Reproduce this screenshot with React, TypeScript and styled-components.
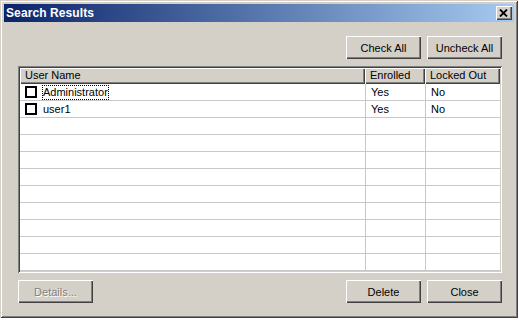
import React from 'react';
import styled, { createGlobalStyle } from 'styled-components';

const GlobalStyle = createGlobalStyle`
  html, body {
    margin: 0;
    padding: 0;
    background: #ffffff;
  }
  body {
    font-family: "Liberation Sans", Arial, sans-serif;
    font-size: 11px;
  }
`;

interface UserRow {
  name: string;
  enrolled: string;
  lockedOut: string;
}

const users: UserRow[] = [
  { name: 'Administrator', enrolled: 'Yes', lockedOut: 'No' },
  { name: 'user1', enrolled: 'Yes', lockedOut: 'No' },
];

const TOTAL_ROWS = 11;

const App: React.FC = () => {
  const rows: (UserRow | null)[] = [];
  for (let i = 0; i < TOTAL_ROWS; i++) rows.push(users[i] || null);

  return (
    <>
      <GlobalStyle />
      <Window>
        <TitleBar>
          <TitleText>Search Results</TitleText>
          <CloseButton aria-label="Close">
            <svg width="9" height="8" viewBox="0 0 9 8">
              <path d="M1 0.5L8 7.5M8 0.5L1 7.5" stroke="#000" strokeWidth="1.8" />
            </svg>
          </CloseButton>
        </TitleBar>

        <Body>
          <ButtonRow $align="flex-end">
            <Button>Check All</Button>
            <Button>Uncheck All</Button>
          </ButtonRow>

          <ListView>
            <HeaderRow>
              <HeaderCell>User Name</HeaderCell>
              <HeaderCell>Enrolled</HeaderCell>
              <HeaderCell>Locked Out</HeaderCell>
            </HeaderRow>
            <Rows>
              {rows.map((row, i) => (
                <Row key={i}>
                  <Cell>
                    {row && (
                      <>
                        <CheckBox />
                        <NameLabel $focused={i === 0}>{row.name}</NameLabel>
                      </>
                    )}
                  </Cell>
                  <Cell>{row?.enrolled}</Cell>
                  <Cell>{row?.lockedOut}</Cell>
                </Row>
              ))}
            </Rows>
          </ListView>

          <ButtonRow $align="space-between">
            <Button disabled>Details...</Button>
            <ButtonGroup>
              <Button>Delete</Button>
              <Button>Close</Button>
            </ButtonGroup>
          </ButtonRow>
        </Body>
      </Window>
    </>
  );
};

export default App;

// Styled Components
const Window = styled.div`
  box-sizing: border-box;
  width: 518px;
  height: 318px;
  padding: 4px;
  background: #d4d0c8;
  display: flex;
  flex-direction: column;
  box-shadow:
    inset 1px 1px 0 #d4d0c8,
    inset -1px -1px 0 #404040,
    inset 2px 2px 0 #ffffff,
    inset -2px -2px 0 #808080;
`;

const TitleBar = styled.div`
  height: 18px;
  display: flex;
  align-items: center;
  justify-content: space-between;
  padding: 0 2px 0 2px;
  background: linear-gradient(to right, #0a246a, #a6caf0);
`;

const TitleText = styled.span`
  color: #ffffff;
  font-weight: bold;
  font-size: 12px;
  letter-spacing: 0.1px;
`;

const CloseButton = styled.button`
  box-sizing: border-box;
  width: 16px;
  height: 14px;
  padding: 0 1px 1px 0;
  margin: 0;
  border: none;
  background: #d4d0c8;
  display: flex;
  align-items: center;
  justify-content: center;
  box-shadow:
    inset 1px 1px 0 #ffffff,
    inset -1px -1px 0 #404040,
    inset -2px -2px 0 #808080;
`;

const Body = styled.div`
  flex: 1;
  display: flex;
  flex-direction: column;
  gap: 7px;
  padding: 14px 12px 11px 14px;
  min-height: 0;
`;

const ButtonRow = styled.div<{ $align: string }>`
  display: flex;
  justify-content: ${(p) => p.$align};
  gap: 6px;
  flex-shrink: 0;
`;

const ButtonGroup = styled.div`
  display: flex;
  gap: 6px;
`;

const Button = styled.button`
  box-sizing: border-box;
  width: 75px;
  height: 23px;
  padding: 0;
  margin: 0;
  border: none;
  background: #d4d0c8;
  font-family: "Liberation Sans", Arial, sans-serif;
  font-size: 11px;
  color: #000000;
  box-shadow:
    inset 1px 1px 0 #ffffff,
    inset -1px -1px 0 #404040,
    inset -2px -2px 0 #808080;

  &:disabled {
    color: #808080;
    text-shadow: 1px 1px 0 #ffffff;
  }
`;

const ListView = styled.div`
  flex: 1;
  min-height: 0;
  padding: 2px;
  background: #ffffff;
  display: flex;
  flex-direction: column;
  overflow: hidden;
  box-shadow:
    inset 1px 1px 0 #808080,
    inset -1px -1px 0 #ffffff,
    inset 2px 2px 0 #404040,
    inset -2px -2px 0 #d4d0c8;
`;

const columns = '345px 60px 75px';

const HeaderRow = styled.div`
  display: grid;
  grid-template-columns: ${columns};
  height: 16px;
  flex-shrink: 0;
`;

const HeaderCell = styled.div`
  box-sizing: border-box;
  background: #d4d0c8;
  padding: 0 0 0 5px;
  line-height: 15px;
  color: #000000;
  white-space: nowrap;
  overflow: hidden;
  box-shadow:
    inset 1px 1px 0 #ffffff,
    inset -1px -1px 0 #404040,
    inset -2px -2px 0 #808080;
`;

const Rows = styled.div`
  flex: 1;
  overflow: hidden;
`;

const Row = styled.div`
  display: grid;
  grid-template-columns: ${columns};
  height: 17px;
  box-sizing: border-box;
  border-bottom: 1px solid #c8c8c8;
`;

const Cell = styled.div`
  display: flex;
  align-items: center;
  padding-left: 5px;
  color: #000000;
  white-space: nowrap;
  overflow: hidden;
  & + & {
    border-left: 1px solid #c8c8c8;
  }
`;

const CheckBox = styled.span`
  box-sizing: border-box;
  width: 12px;
  height: 12px;
  border: 2px solid #000000;
  background: #ffffff;
  flex-shrink: 0;
  margin-right: 5px;
`;

const NameLabel = styled.span<{ $focused?: boolean }>`
  padding: 1px 1px;
  line-height: 13px;
  outline: ${(p) => (p.$focused ? '1px dotted #000000' : 'none')};
  outline-offset: -1px;
`;
